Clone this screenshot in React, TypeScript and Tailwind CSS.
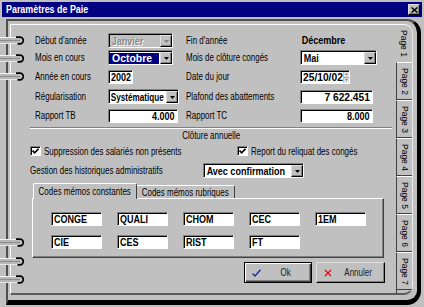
import React from 'react';

const sunken =
  'border border-t-[#808080] border-l-[#808080] border-r-white border-b-white shadow-[inset_1px_1px_0_#000]';
const raised =
  'border border-t-[#dfdfdf] border-l-[#dfdfdf] border-r-black border-b-black shadow-[inset_-1px_-1px_0_#808080]';

// the screenshot is squeezed horizontally, so text is narrowed with scale-x
const lbl = 'inline-block whitespace-nowrap leading-none origin-left scale-x-[0.76]';
const val = 'inline-block whitespace-nowrap leading-none font-bold text-[11px] origin-left scale-x-[0.82]';

const Arrow: React.FC<{ gray?: boolean }> = ({ gray }) => (
  <div className={`${raised} w-[12px] h-[12px] bg-[#c0c0c0] flex items-center justify-center shrink-0`}>
    <svg width="5" height="3" viewBox="0 0 5 3">
      <path d="M0 0h5L2.5 3z" fill={gray ? '#808080' : '#000'} />
    </svg>
  </div>
);

const Combo: React.FC<{
  value: string;
  className: string;
  selected?: boolean;
  disabled?: boolean;
  tight?: boolean;
}> = ({ value, className, selected, disabled, tight }) => (
  <div className={`${sunken} h-[15px] flex pt-[1px] pl-[1px] ${disabled ? 'bg-[#c0c0c0]' : 'bg-white'} ${className}`}>
    <div className="flex-1 min-w-0 overflow-hidden flex items-center pr-[1px]">
      {selected ? (
        <div className="flex-1 h-[11px] bg-[#000080] text-white flex items-center pl-[2px]">
          <span className="inline-block whitespace-nowrap leading-none font-bold text-[11px] origin-left scale-x-[0.95]">
            {value}
          </span>
        </div>
      ) : tight ? (
        <span className="inline-block whitespace-nowrap leading-none font-bold text-[11px] origin-left scale-x-[0.74] pl-[1px]">
          {value}
        </span>
      ) : (
        <span className={`${val} pl-[2px] ${disabled ? 'text-[#8a8a8a] [text-shadow:1px_1px_0_#fff]' : ''}`}>
          {value}
        </span>
      )}
    </div>
    <Arrow gray={disabled} />
  </div>
);

const Field: React.FC<{ value: string; className: string; right?: boolean; wide?: boolean }> = ({
  value,
  className,
  right,
  wide,
}) => (
  <div
    className={`${sunken} h-[14px] bg-white flex items-center pt-[1px] px-[2px] ${
      right ? 'justify-end' : ''
    } ${className}`}
  >
    <span
      className={`inline-block whitespace-nowrap leading-none font-bold text-[11px] ${
        right ? 'origin-right' : 'origin-left'
      } ${wide ? 'scale-x-[0.93]' : 'scale-x-[0.82]'}`}
    >
      {value}
    </span>
  </div>
);

const Cell: React.FC<{ children: React.ReactNode }> = ({ children }) => (
  <div className="h-[15px] flex items-center">{children}</div>
);

const Check = () => (
  <div className={`${sunken} w-[11px] h-[10px] bg-white flex items-center justify-center shrink-0`}>
    <svg width="7" height="6" viewBox="0 0 7 6">
      <path d="M0.5 2.6 L2.6 4.8 L6.5 0.8" stroke="#000" strokeWidth="1.6" fill="none" />
    </svg>
  </div>
);

const Ring = () => (
  <svg width="26" height="9" viewBox="0 0 26 9">
    <rect x="0" y="1" width="20" height="7" fill="#b8b8b8" />
    <line x1="0" y1="1.5" x2="20" y2="1.5" stroke="#f4f4f4" strokeWidth="1" />
    <line x1="0" y1="7.5" x2="20" y2="7.5" stroke="#e8e8e8" strokeWidth="1" />
    <line x1="0" y1="4.5" x2="20" y2="4.5" stroke="#8c8c8c" strokeWidth="1" />
    <path d="M16 1.2 H20 A3.3 3.3 0 0 1 20 7.8 H17.5" stroke="#000" strokeWidth="1.7" fill="none" />
  </svg>
);

const codes = ['CONGE', 'QUALI', 'CHOM', 'CEC', '1EM', 'CIE', 'CES', 'RIST', 'FT'];
const pages = ['Page 2', 'Page 3', 'Page 4', 'Page 5', 'Page 6', 'Page 7'];

export default function App() {
  return (
    <div className="relative w-[424px] h-[307px] bg-[#c0c0c0] flex flex-col overflow-hidden text-black text-[10.5px] [font-family:'Liberation_Sans',Arial,sans-serif]">
      {/* title bar */}
      <div className="mx-[2px] mt-[2px] h-[15px] bg-[#000080] flex items-center justify-between pl-[4px] pr-[2px]">
        <span className="inline-block whitespace-nowrap leading-none text-white font-bold text-[11px] origin-left scale-x-[0.81]">
          Paramètres de Paie
        </span>
        <div className={`${raised} w-[12px] h-[11px] bg-[#c0c0c0] flex items-center justify-center`}>
          <svg width="7" height="6" viewBox="0 0 7 6">
            <path d="M0.5 0.5 L6.5 5.5 M6.5 0.5 L0.5 5.5" stroke="#000" strokeWidth="1.5" />
          </svg>
        </div>
      </div>

      {/* binder */}
      <div className="flex-1 flex pl-[6px] pr-[3px] pt-[2px] pb-[2px]">
        <div className="flex-1 flex border-t-2 border-l-2 border-t-[#505050] border-l-[#505050] border-r-[4px] border-b-[5px] border-r-black border-b-black rounded-r-[14px] pl-[2px] pt-[3px] pr-[4px] pb-[5px]">
          <div className="flex-1 flex border-t border-l border-r border-t-white border-l-white border-r-[#e8e8e8] border-b-2 border-b-[#5a5a5a] rounded-r-[9px]">
            {/* page content */}
            <div className="flex-1 flex flex-col pt-[8px]">
              <div className="ml-[24px] grid grid-cols-[73px_78px_114px_1fr] grid-rows-[17px_19px_20px_19px_15px] items-start">
                <Cell>
                  <span className={lbl}>Début d'année</span>
                </Cell>
                <Cell>
                  <Combo value="Janvier" className="w-[65px]" disabled />
                </Cell>
                <Cell>
                  <span className={lbl}>Fin d'année</span>
                </Cell>
                <Cell>
                  <span className={`${val} pl-[2px]`}>Décembre</span>
                </Cell>

                <Cell>
                  <span className={lbl}>Mois en cours</span>
                </Cell>
                <Cell>
                  <Combo value="Octobre" className="w-[65px]" selected />
                </Cell>
                <Cell>
                  <span className={lbl}>Mois de clôture congés</span>
                </Cell>
                <Cell>
                  <Combo value="Mai" className="w-[77px]" />
                </Cell>

                <Cell>
                  <span className={lbl}>Année en cours</span>
                </Cell>
                <Cell>
                  <Field value="2002" className="w-[25px]" />
                </Cell>
                <Cell>
                  <span className={lbl}>Date du jour</span>
                </Cell>
                <Cell>
                  <div className={`${sunken} w-[50px] h-[14px] bg-white flex pt-[1px] pl-[1px]`}>
                    <div className="flex-1 min-w-0 overflow-hidden flex items-center pl-[1px]">
                      <span className="inline-block whitespace-nowrap leading-none font-bold text-[11px] origin-left scale-x-[0.93]">
                        25/10/02
                      </span>
                    </div>
                    <div className="w-[6px] shrink-0 flex flex-col border-l border-l-[#c0c0c0]">
                      <div className="flex-1 bg-[#e4e4e4] flex items-center justify-center border-b border-b-[#a0a0a0]">
                        <svg width="3" height="2" viewBox="0 0 3 2">
                          <path d="M0 2h3L1.5 0z" fill="#808080" />
                        </svg>
                      </div>
                      <div className="flex-1 bg-[#e4e4e4] flex items-center justify-center">
                        <svg width="3" height="2" viewBox="0 0 3 2">
                          <path d="M0 0h3L1.5 2z" fill="#808080" />
                        </svg>
                      </div>
                    </div>
                  </div>
                </Cell>

                <Cell>
                  <span className={lbl}>Régularisation</span>
                </Cell>
                <Cell>
                  <Combo value="Systématique" className="w-[71px]" tight />
                </Cell>
                <Cell>
                  <span className={lbl}>Plafond des abattements</span>
                </Cell>
                <Cell>
                  <Field value="7 622.451" className="w-[73px]" right wide />
                </Cell>

                <Cell>
                  <span className={lbl}>Rapport TB</span>
                </Cell>
                <Cell>
                  <Field value="4.000" className="w-[70px]" right />
                </Cell>
                <Cell>
                  <span className={lbl}>Rapport TC</span>
                </Cell>
                <Cell>
                  <Field value="8.000" className="w-[73px]" right />
                </Cell>
              </div>

              <div className="ml-[19px] mr-[4px] mt-[4px] border-t border-b border-t-[#808080] border-b-white" />
              <div className="ml-[19px] mr-[4px] h-[12px] flex items-center justify-center">
                <span className="inline-block whitespace-nowrap leading-none origin-center scale-x-[0.76]">
                  Clôture annuelle
                </span>
              </div>

              <div className="mt-[4px] ml-[19px] h-[12px] grid grid-cols-[207px_1fr] items-center">
                <div className="flex items-center gap-[3px]">
                  <Check />
                  <span className={lbl}>Suppression des salariés non présents</span>
                </div>
                <div className="flex items-center gap-[3px]">
                  <Check />
                  <span className={lbl}>Report du reliquat des congés</span>
                </div>
              </div>

              <div className="mt-[6px] ml-[19px] h-[15px] flex items-center">
                <div className="w-[173px] shrink-0">
                  <span className={lbl}>Gestion des historiques administratifs</span>
                </div>
                <Combo value="Avec confirmation" className="w-[101px] shrink-0" />
              </div>

              {/* memo tabs */}
              <div className="mt-[5px] ml-[22px] h-[15px] flex items-end">
                <div className="relative z-10 -mb-[1px] w-[104px] h-[16px] bg-[#c0c0c0] border-t border-l border-r border-t-white border-l-white border-r-[#404040] rounded-t-[2px] flex items-center justify-center pb-[1px]">
                  <span className="inline-block whitespace-nowrap leading-none origin-center scale-x-[0.76]">
                    Codes mémos constantes
                  </span>
                </div>
                <div className="w-[98px] h-[13px] border-t border-r border-t-white border-r-[#404040] rounded-tr-[2px] flex items-center justify-center">
                  <span className="inline-block whitespace-nowrap leading-none origin-center scale-x-[0.76]">
                    Codes mémos rubriques
                  </span>
                </div>
              </div>
              <div className="ml-[21px] w-[352px] h-[60px] border border-t-white border-l-white border-r-[#404040] border-b-[#404040] shadow-[inset_-1px_-1px_0_#808080] pl-[18px] pt-[13px]">
                <div className="grid grid-cols-[51px_51px_51px_51px_51px] gap-x-[15px] gap-y-[9px]">
                  {codes.map((c) => (
                    <div key={c} className={`${sunken} h-[14px] bg-white flex items-center pt-[1px] pl-[2px]`}>
                      <span className={val}>{c}</span>
                    </div>
                  ))}
                </div>
              </div>

              <div className="mt-[4px] mr-[11px] flex justify-end gap-[4px]">
                <button className="w-[68px] h-[21px] border border-black shadow-[inset_1px_1px_0_#fff,inset_-1px_-1px_0_#404040,inset_-2px_-2px_0_#808080] bg-[#c0c0c0] flex items-center pl-[7px]">
                  <svg width="9" height="8" viewBox="0 0 9 8">
                    <path d="M0.5 4.5 L3 7 L8.5 0.8" stroke="#1030a0" strokeWidth="1.4" fill="none" />
                  </svg>
                  <span className="flex-1 flex justify-center text-[#202020]">
                    <span className="inline-block whitespace-nowrap leading-none origin-center scale-x-[0.76]">Ok</span>
                  </span>
                </button>
                <button className={`${raised} w-[69px] h-[21px] bg-[#c0c0c0] flex items-center pl-[7px]`}>
                  <svg width="8" height="8" viewBox="0 0 8 8">
                    <path d="M1 1 L7 7 M7 1 L1 7" stroke="#e01010" strokeWidth="1.4" />
                  </svg>
                  <span className="flex-1 flex justify-center text-[#202020]">
                    <span className="inline-block whitespace-nowrap leading-none origin-center scale-x-[0.76]">
                      Annuler
                    </span>
                  </span>
                </button>
              </div>
            </div>

            {/* page tabs */}
            <div className="w-[16px] flex flex-col text-[8.5px]">
              <div className="h-[37px] flex items-center justify-center">
                <span className="[writing-mode:vertical-rl] leading-none">Page 1</span>
              </div>
              {pages.map((p) => (
                <div
                  key={p}
                  className="h-[38px] border-l border-t border-b border-l-[#404040] border-t-white border-b-[#404040] flex items-center justify-center"
                >
                  <span className="[writing-mode:vertical-rl] leading-none">{p}</span>
                </div>
              ))}
              <div className="flex-1 border-l border-l-[#404040]" />
            </div>
          </div>
        </div>
      </div>

      {/* binder rings */}
      {[36, 54, 72, 238, 257, 275].map((t) => (
        <div key={t} className="absolute left-0" style={{ top: t }}>
          <Ring />
        </div>
      ))}
    </div>
  );
}
